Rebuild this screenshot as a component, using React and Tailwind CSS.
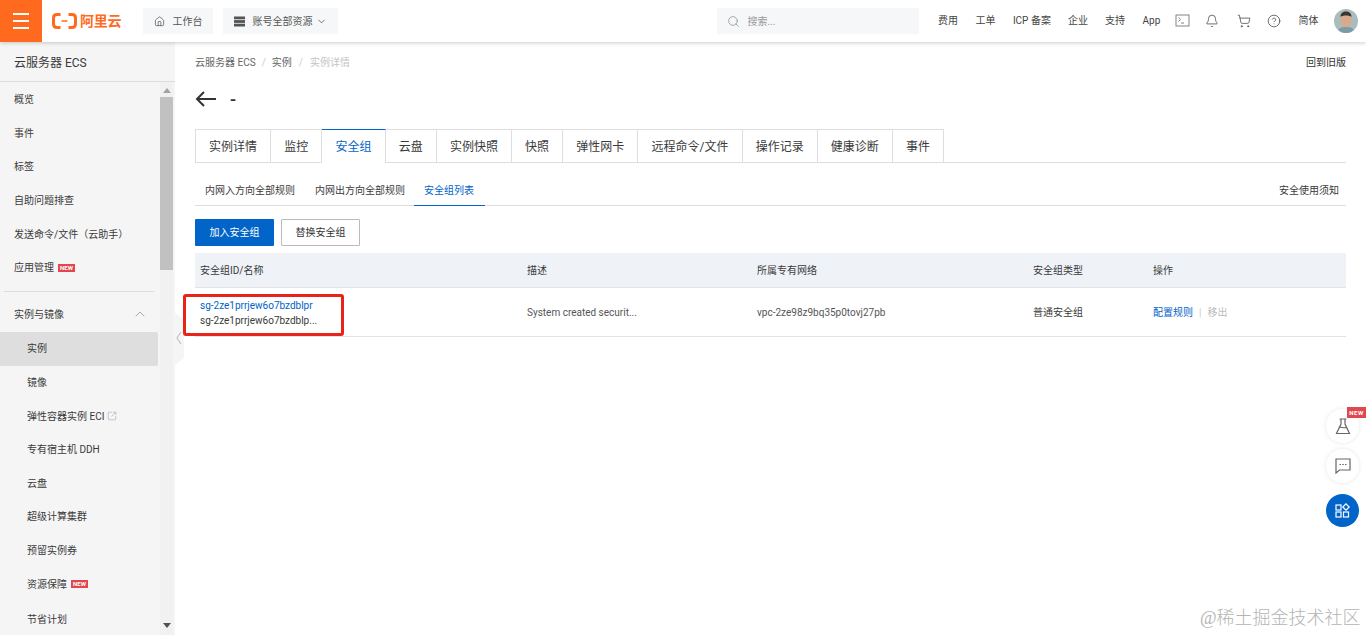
import React from "react";
import { ChevronDown, ChevronUp, Search, Bell, ShoppingCart, CircleHelp, House, SquareArrowOutUpRight } from "lucide-react";

const NewTag = () => (
  <span className="ml-[4px] inline-flex h-[8px] w-[17px] items-center justify-center bg-[#e0484e] text-[6px] font-bold leading-none text-white">
    NEW
  </span>
);

const topLinks = [
  { label: "费用", w: "w-[21px]", mr: "mr-[17px]" },
  { label: "工单", w: "w-[20px]", mr: "mr-[16px]" },
  { label: "ICP 备案", w: "w-[41px]", mr: "mr-[15px]" },
  { label: "企业", w: "w-[21px]", mr: "mr-[16px]" },
  { label: "支持", w: "w-[21px]", mr: "mr-[17px]" },
  { label: "App", w: "w-[18px]", mr: "mr-[15px]" },
];

const tabs = ["实例详情", "监控", "安全组", "云盘", "实例快照", "快照", "弹性网卡", "远程命令/文件", "操作记录", "健康诊断", "事件"];

const sideTop = ["概览", "事件", "标签", "自助问题排查", "发送命令/文件（云助手）"];
const sideSub = ["镜像", "弹性容器实例 ECI", "专有宿主机 DDH", "云盘", "超级计算集群", "预留实例券", "资源保障", "节省计划"];

const Logo = () => (
  <div className="ml-[10px] flex items-center text-[#ff6a1f]">
    <svg width="25" height="16" viewBox="0 0 25 16" fill="none">
      <path d="M8.500 1.500H5C2.800 1.500 1.500 2.800 1.500 5v6c0 2.200 1.300 3.500 3.500 3.500h3.500" stroke="currentColor" strokeWidth="3" />
      <path d="M16.500 1.500H20c2.200 0 3.500 1.300 3.500 3.500v6c0 2.200-1.300 3.500-3.500 3.500h-3.500" stroke="currentColor" strokeWidth="3" />
      <path d="M9.500 8h6" stroke="currentColor" strokeWidth="1.500" />
    </svg>
    <span className="ml-[3px] text-[14px] font-bold leading-none tracking-[-0.2px]">阿里云</span>
  </div>
);

const Header = () => (
  <header className="relative z-20 flex h-[42px] shrink-0 items-center bg-white shadow-[0_1px_4px_rgba(0,0,0,0.2)]">
    <div className="flex h-[42px] w-[42px] items-center justify-center bg-[#ff6a1f]">
      <div className="flex w-[16px] flex-col gap-[5px]">
        <div className="h-[2px] bg-white"></div>
        <div className="h-[2px] bg-white"></div>
        <div className="h-[2px] bg-white"></div>
      </div>
    </div>
    <Logo />
    <div className="ml-[22px] flex h-[26px] w-[70px] items-center bg-[#f5f7f8] pl-[11px] text-[10px] text-[#555]">
      <House size={11} strokeWidth={1.6} className="mr-[7px] text-[#555]" />
      工作台
    </div>
    <div className="ml-[10px] flex h-[26px] w-[115px] items-center bg-[#f5f7f8] pl-[11px] text-[10px] text-[#555]">
      <svg width="11" height="11" viewBox="0 0 11 11" className="mr-[7px]" fill="#555">
        <rect x="0" y="0.500" width="11" height="2.800" />
        <rect x="0" y="4.100" width="11" height="2.800" />
        <rect x="0" y="7.700" width="11" height="2.800" />
      </svg>
      账号全部资源
      <ChevronDown size={11} className="ml-[4px] text-[#666]" />
    </div>
    <div className="ml-[379px] flex h-[26px] w-[202px] items-center bg-[#f5f7f8] pl-[10px] text-[10px] text-[#999]">
      <Search size={13} strokeWidth={1.3} className="mr-[7px] text-[#888]" />
      搜索...
    </div>
    <div className="ml-[18px] flex items-center pb-[1px] text-[10px] text-[#444]">
      {topLinks.map((l) => (
        <span key={l.label} className={`whitespace-nowrap text-center ${l.w} ${l.mr}`}>
          {l.label}
        </span>
      ))}
      <svg width="15" height="13" viewBox="0 0 15 13" fill="none" stroke="#777" strokeWidth="0.900" className="mr-[15px]">
        <rect x="1" y="1" width="13" height="11" />
        <path d="M3.500 3.500l2 2-2 2M6 9h3" />
      </svg>
      <Bell size={14} strokeWidth={1.3} className="mr-[18px] text-[#444]" />
      <ShoppingCart size={14} strokeWidth={1.3} className="mr-[16px] text-[#444]" />
      <CircleHelp size={14} strokeWidth={1.3} className="mr-[17px] text-[#444]" />
      <span className="mr-[16px] w-[20px]">简体</span>
      <svg width="24" height="24" viewBox="0 0 24 24" className="rounded-full">
        <rect width="24" height="24" fill="#a9bcbe" />
        <ellipse cx="12" cy="11" rx="5.500" ry="7.500" fill="#d9a98c" />
        <path d="M6.500 8c0-4 2.500-5.500 5.500-5.500S17.500 4 17.500 8c-2-2-9-2-11 0z" fill="#3d3630" />
        <path d="M3 24c1-5 4-6 9-6s8 1 9 6z" fill="#7d9ba6" />
      </svg>
    </div>
  </header>
);

const SideRow = ({ children, className = "" }) => (
  <div className={`flex h-[33.6px] items-center text-[10px] text-[#3a3a3a] ${className}`}>{children}</div>
);

const Sidebar = () => (
  <aside className="relative flex w-[175px] shrink-0 flex-col bg-[#f5f5f6]">
    <div className="flex h-[40px] shrink-0 items-center border-b border-[#dcdcdc] pl-[14px] pt-[2px] text-[12px] text-[#3a3a3a]">
      云服务器 ECS
    </div>
    <div className="flex min-h-0 flex-1">
      <div className="h-full w-[158px] overflow-hidden pt-[1px]">
        {sideTop.map((t) => (
          <SideRow key={t} className="pl-[14px]">{t}</SideRow>
        ))}
        <SideRow className="pl-[14px]">
          应用管理
          <NewTag />
        </SideRow>
        <div className="mx-[4px] my-[6px] border-t border-[#dcdcdc]"></div>
        <SideRow className="mb-[1px] justify-between pl-[14px] pr-[10px]">
          实例与镜像
          <ChevronUp size={16} strokeWidth={1.5} className="text-[#aaa]" />
        </SideRow>
        <SideRow className="rounded-r-[2px] bg-[#dedede] pl-[27px]">实例</SideRow>
        {sideSub.map((t) => (
          <SideRow key={t} className={t === "节省计划" ? "mt-[2px] pl-[27px]" : "pl-[27px]"}>
            {t}
            {t === "资源保障" && <NewTag />}
            {t === "弹性容器实例 ECI" && <SquareArrowOutUpRight size={10} strokeWidth={1.500} className="ml-[3px] text-[#aaa]" />}
          </SideRow>
        ))}
      </div>
      <div className="ml-[2px] flex h-full w-[13px] flex-col items-center bg-[#f1f1f1]">
        <div className="mb-[4px] mt-[6px] h-0 w-0 border-x-[4px] border-b-[5px] border-x-transparent border-b-[#a3a3a3]"></div>
        <div className="h-[173px] w-[13px] bg-[#c1c1c1]"></div>
        <div className="flex-1"></div>
        <div className="mb-[7px] h-0 w-0 border-x-[4px] border-t-[5px] border-x-transparent border-t-[#505050]"></div>
      </div>
    </div>
    <svg width="11" height="54" viewBox="0 0 11 54" className="absolute left-[174px] top-[270px]">
      <path d="M0 0L10 8V46L0 54Z" fill="#f5f5f6" />
      <path d="M7 20l-4 6 4 6" fill="none" stroke="#c4c4c4" strokeWidth="1.200" />
    </svg>
  </aside>
);

const Tabs = () => (
  <div className="mt-[13px] flex h-[34px] border-b border-[#dedede]">
    <div className="flex h-[34px] border-l border-t border-[#dedede]">
      {tabs.map((t) => (
        <div
          key={t}
          className={
            t === "安全组"
              ? "relative -mt-px flex h-[34px] items-center border-r border-t border-r-[#dedede] border-t-[#0064c8] bg-white px-[13.1px] text-[12px] text-[#0064c8]"
              : "flex h-[33px] items-center border-r border-[#dedede] px-[13.1px] text-[12px] text-[#3a3a3a]"
          }
        >
          {t}
        </div>
      ))}
    </div>
  </div>
);

const SubTabs = () => (
  <div className="flex h-[43px] items-stretch justify-between border-b border-[#dedede] text-[10px] text-[#3a3a3a]">
    <div className="flex">
      <div className="flex items-center pl-[10px] pr-[10px] pt-[12px]">内网入方向全部规则</div>
      <div className="flex items-center pl-[10px] pr-[9px] pt-[12px]">内网出方向全部规则</div>
      <div className="-mb-px flex items-center border-b border-[#0064c8] pl-[10px] pr-[11px] pt-[12px] text-[#0064c8]">安全组列表</div>
    </div>
    <span className="mr-[7px] flex items-center pt-[12px]">安全使用须知</span>
  </div>
);

const Table = () => (
  <div className="mt-[7px] text-[10px] text-[#3a3a3a]">
    <div className="grid h-[35px] grid-cols-[327px_230px_276px_120px_198px] items-center border-b border-[#e3e3e3] bg-[#eff3f8] [&>div]:pl-[5px]">
      <div>安全组ID/名称</div>
      <div>描述</div>
      <div>所属专有网络</div>
      <div>安全组类型</div>
      <div>操作</div>
    </div>
    <div className="grid h-[49px] grid-cols-[327px_230px_276px_120px_198px] items-center border-b border-[#e3e3e3] text-[#555] [&>div]:pl-[5px]">
      <div className="pt-[1px] leading-[15px]">
        <div className="text-[#0064c8]">sg-2ze1prrjew6o7bzdblpr</div>
        <div className="text-[#3a3a3a]">sg-2ze1prrjew6o7bzdblp...</div>
      </div>
      <div>System created securit...</div>
      <div>vpc-2ze98z9bq35p0tovj27pb</div>
      <div className="text-[#3a3a3a]">普通安全组</div>
      <div className="flex items-center">
        <span className="text-[#0064c8]">配置规则</span>
        <span className="mx-[6px] text-[#ccc]">|</span>
        <span className="text-[#bbb]">移出</span>
      </div>
    </div>
  </div>
);

const Floats = () => (
  <div className="absolute left-[1326px] top-[409px] z-10 flex w-[33px] flex-col gap-[6px]">
    <div className="relative flex h-[34px] w-[33px] items-center justify-center rounded-full bg-white shadow-[0_0_4px_rgba(0,0,0,0.1)]">
      <svg width="16" height="17" viewBox="0 0 16 17" fill="none" stroke="#666" strokeWidth="1.200">
        <path d="M4.500 1h7M6 1v5L1.500 15.500h13L10 6V1M4.500 9.500c2-1 4 1 6.500 0" />
      </svg>
      <span className="absolute -right-[7px] -top-[2px] flex h-[11px] w-[19px] items-center justify-center bg-[#e0484e] text-[6px] font-bold tracking-[0.5px] text-white">
        NEW
      </span>
    </div>
    <div className="flex h-[34px] w-[33px] items-center justify-center rounded-full bg-white shadow-[0_0_4px_rgba(0,0,0,0.1)]">
      <svg width="16" height="16" viewBox="0 0 16 16" fill="none" stroke="#666" strokeWidth="1.200">
        <path d="M1 1h14v11H4.500L1 15z" />
        <path d="M4.500 6.500h1.500M7.300 6.500h1.500M10 6.500h1.500" />
      </svg>
    </div>
    <div className="mt-[5px] flex h-[33px] w-[33px] items-center justify-center rounded-full bg-[#0064c8]">
      <svg width="15" height="15" viewBox="0 0 15 15" fill="none" stroke="#fff" strokeWidth="1.200">
        <rect x="1" y="2" width="5" height="5" />
        <path d="M11 0.800l3.200 3.200L11 7.200 7.800 4z" />
        <rect x="1" y="9" width="5" height="5" />
        <rect x="8.500" y="9" width="5" height="5" />
      </svg>
    </div>
  </div>
);

export default function App() {
  return (
    <div className="relative flex h-screen flex-col overflow-hidden bg-white [font-family:Roboto,'Noto_Sans_CJK_SC',sans-serif]">
      <Header />
      <div className="flex min-h-0 flex-1">
        <Sidebar />
        <main className="min-w-0 flex-1 pl-[20px] pr-[20px]">
          <div className="flex h-[40px] items-center justify-between text-[10px] text-[#666]">
            <div className="flex items-center">
              云服务器 ECS
              <span className="mx-[6px] text-[#ccc]">/</span>
              实例
              <span className="mx-[7px] text-[#ccc]">/</span>
              <span className="text-[#c4c4c4]">实例详情</span>
            </div>
            <span className="text-[#333]">回到旧版</span>
          </div>
          <div className="flex h-[34px] items-center text-[#333]">
            <svg width="21" height="16" viewBox="0 0 21 16" fill="none" stroke="#333" strokeWidth="2">
              <path d="M21 8H2M9 1L2 8l7 7" />
            </svg>
            <span className="ml-[14px] text-[18px] font-medium">-</span>
          </div>
          <Tabs />
          <SubTabs />
          <div className="mt-[13px] flex gap-[7px] text-[10px]">
            <button className="h-[27px] w-[79px] rounded-[1px] bg-[#0064c8] text-white">加入安全组</button>
            <button className="h-[27px] w-[79px] rounded-[1px] border border-[#bbb] bg-white text-[#333]">替换安全组</button>
          </div>
          <Table />
        </main>
      </div>
      {/* red annotation on the screenshot */}
      <div className="absolute left-[183px] top-[294px] z-10 h-[42px] w-[161px] rounded-[3px] border-[3px] border-[#e8231a]"></div>
      <Floats />
      <div className="absolute left-[1200px] top-[605px] z-10 text-[18px] font-light leading-[26px] text-[#b4b4b4] [font-family:'Liberation_Serif','Noto_Sans_CJK_SC',serif]">
        @稀土掘金技术社区
      </div>
    </div>
  );
}
